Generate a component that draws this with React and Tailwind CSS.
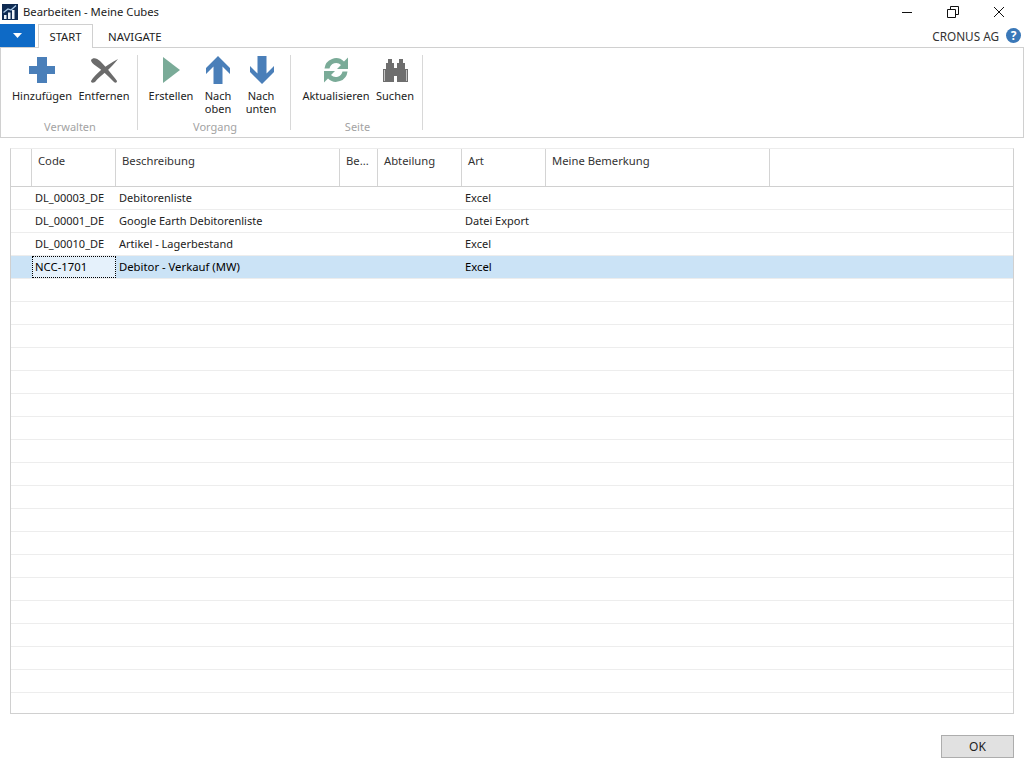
const FONT = "font-['Noto_Sans','Open_Sans',sans-serif]";
const GRID = "grid grid-cols-[21px_84px_224px_38px_84px_84px_224px_1fr]";

function Logo() {
  return (
    <svg width="16" height="16" viewBox="0 0 16 16" className="block">
      <rect width="16" height="16" fill="#0f2b52" />
      <rect x="2" y="11" width="2.5" height="4" fill="#eef3f8" />
      <rect x="6" y="8.5" width="2.5" height="6.5" fill="#eef3f8" />
      <rect x="10" y="6" width="2.5" height="9" fill="#eef3f8" />
      <path d="M1.5 8.5 L6 5 L9 6 L14 1.5" stroke="#a9c8e6" strokeWidth="1.3" fill="none" />
    </svg>
  );
}
function Plus() {
  return (
    <svg width="26" height="26" viewBox="0 0 26 26" className="block">
      <path d="M8 0h10v9h8v8h-8v9H8v-9H0V9h8z" fill="#4a7fb9" />
    </svg>
  );
}
function Cross() {
  return (
    <svg width="28" height="26" viewBox="0 0 28 26" className="block">
      <path d="M1 3 C3 0 7 1 10 4 C15 9 22 17 27 24 C27 26 25 26 24 25 C18 19 12 13 6 9 C3 7 1 5 1 3 Z" fill="#6b6b6b" />
      <path d="M28 2 C22 5 16 9 11 13 C7 17 3 20 1 24 C1 26 3 26 5 25 C8 21 13 17 17 14 C21 10 25 6 28 2 Z" fill="#6b6b6b" />
    </svg>
  );
}
function Play() {
  return (
    <svg width="17" height="26" viewBox="0 0 17 26" className="block">
      <path d="M0 0 L17 13 L0 26 Z" fill="#7aab98" />
    </svg>
  );
}
function Up() {
  return (
    <svg width="24" height="28" viewBox="0 0 24 28" className="block">
      <path d="M12 0 L24 12 V18 L16.500 10.500 V28 H7.500 V10.500 L0 18 V12 Z" fill="#4a7fb9" />
    </svg>
  );
}
function Down() {
  return (
    <svg width="24" height="28" viewBox="0 0 24 28" className="block ml-[2px]">
      <path d="M12 28 L24 16 V10 L16.500 17.500 V0 H7.500 V17.500 L0 10 V16 Z" fill="#4a7fb9" />
    </svg>
  );
}
function Refresh() {
  const arc = "M1.500 11.500 A11.500 11.500 0 0 1 21 4.500 L25 .5 V12 H14 L18 8 A6.800 6.800 0 0 0 6.500 11.500 Z";
  return (
    <svg width="26" height="26" viewBox="0 0 26 26" className="block">
      <path d={arc} fill="#7aab98" />
      <path d={arc} fill="#7aab98" transform="rotate(180 13 13)" />
    </svg>
  );
}
function Binoculars() {
  return (
    <svg width="27" height="23" viewBox="0 0 27 23" className="block">
      <path d="M6 0 H10 V4 H12 V23 H1 V10 H4 V4 H6 Z" fill="#6e6e6e" />
      <path d="M21 0 H17 V4 H15 V23 H26 V10 H23 V4 H21 Z" fill="#6e6e6e" />
      <rect x="12" y="9" width="3" height="8" fill="#6e6e6e" />
      <rect x="2" y="11" width="1" height="11" fill="#c4c4c4" />
      <rect x="24" y="11" width="1" height="11" fill="#c4c4c4" />
    </svg>
  );
}

function RibbonButton({ width, icon, lines }) {
  return (
    <div className={`${width} flex flex-col items-center`}>
      <div className="h-[30px] flex items-center justify-center">{icon}</div>
      <div className="mt-[4px] flex flex-col items-center text-[11px] leading-[13px] text-[#222222]">
        {lines.map((l) => (
          <span key={l} className="whitespace-nowrap">{l}</span>
        ))}
      </div>
    </div>
  );
}

function RibbonGroup({ width, pad, label, children }) {
  return (
    <div className={`${width} h-full flex flex-col`}>
      <div className={`${pad} flex-1 flex items-start pt-[7px]`}>{children}</div>
      <div className="h-[17px] pl-[2px] text-center text-[11px] leading-[14px] text-[#a3a3a3]">{label}</div>
    </div>
  );
}

const ROWS = [
  ["DL_00003_DE", "Debitorenliste", "Excel"],
  ["DL_00001_DE", "Google Earth Debitorenliste", "Datei Export"],
  ["DL_00010_DE", "Artikel - Lagerbestand", "Excel"],
  ["NCC-1701", "Debitor - Verkauf (MW)", "Excel"],
];
const HEADERS = ["", "Code", "Beschreibung", "Be...", "Abteilung", "Art", "Meine Bemerkung"];

export default function App() {
  const rows = Array.from({ length: 23 }, (_, i) => ROWS[i] || null);
  return (
    <div className={`${FONT} w-[1024px] h-[768px] bg-white overflow-hidden flex flex-col text-[11px] text-[#222222]`}>
      <div className="h-6 flex items-center shrink-0 pl-[2px]">
        <Logo />
        <span className="ml-[5px] leading-none text-[11.25px]">Bearbeiten - Meine Cubes</span>
        <div className="ml-auto flex items-center">
          <svg width="12" height="12" viewBox="0 0 12 12" className="mr-[34px] block"><path d="M1 6.500H11" stroke="#111" /></svg>
          <svg width="12" height="12" viewBox="0 0 12 12" className="mr-[34px] block"><path d="M.5 3.500H8.500V11.500H.5ZM3.500 3V.5H11.500V8.500H9" stroke="#111" fill="none" /></svg>
          <svg width="12" height="12" viewBox="0 0 12 12" className="mr-[19px] block"><path d="M1 1L11 11M11 1L1 11" stroke="#111" /></svg>
        </div>
      </div>
      <div className="h-[24px] flex shrink-0 relative">
        <div className="w-[35px] h-[23px] bg-[#0e6ac6] flex items-center justify-center">
          <svg width="9" height="5" viewBox="0 0 9 5"><path d="M0 0H9L4.500 5Z" fill="#fff" /></svg>
        </div>
        <div className="ml-[3px] w-[55px] h-[24px] pt-px border border-b-0 border-[#d0d0d0] bg-white z-10 flex items-center justify-center text-[11.25px]">START</div>
        <div className="ml-[15px] h-[25px] flex items-center text-[11.4px]">NAVIGATE</div>
        <div className="ml-auto h-[25px] flex items-center pr-[3px]">
          <span className="mr-[7px] text-[#333333] text-[11.75px]">CRONUS AG</span>
          <div className="w-[15px] h-[15px] -mt-[2px] rounded-full bg-[#3a78b8] flex items-center justify-center text-white font-bold text-[12px] leading-none">?</div>
        </div>
      </div>
      <div className="h-[91px] -mt-px border border-[#d0d0d0] flex shrink-0">
        <RibbonGroup width="w-[136px]" pad="pl-[9px]" label="Verwalten">
          <RibbonButton width="w-[64px]" icon={<Plus />} lines={["Hinzufügen"]} />
          <RibbonButton width="w-[60px]" icon={<Cross />} lines={["Entfernen"]} />
        </RibbonGroup>
        <div className="w-px h-[75px] mt-[7px] bg-[#d8d8d8]" />
        <RibbonGroup width="w-[152px]" pad="pl-[9px]" label="Vorgang">
          <RibbonButton width="w-[48px]" icon={<Play />} lines={["Erstellen"]} />
          <RibbonButton width="w-[46px]" icon={<Up />} lines={["Nach", "oben"]} />
          <RibbonButton width="w-[40px]" icon={<Down />} lines={["Nach", "unten"]} />
        </RibbonGroup>
        <div className="w-px h-[75px] mt-[7px] bg-[#d8d8d8]" />
        <RibbonGroup width="w-[131px]" pad="pl-[9px]" label="Seite">
          <RibbonButton width="w-[72px]" icon={<Refresh />} lines={["Aktualisieren"]} />
          <RibbonButton width="w-[46px]" icon={<Binoculars />} lines={["Suchen"]} />
        </RibbonGroup>
        <div className="w-px h-[75px] mt-[7px] bg-[#d8d8d8]" />
      </div>
      <div className="mx-[10px] mt-[10px] h-[566px] shrink-0 border border-[#d0d0d0] border-t-[#ececec] overflow-hidden">
        <div className={`${GRID} h-[38px] border-b border-[#d0d0d0] text-[#333333] text-[11.25px]`}>
          {HEADERS.map((h, i) => (
            <div key={i} className="border-r border-[#d4d4d4] pl-[6px] pt-[3px] leading-[18px] whitespace-nowrap">{h}</div>
          ))}
          <div />
        </div>
        {rows.map((r, i) => {
          const sel = i === 3;
          return (
            <div key={i} className={`${GRID} h-[23px] border-b border-[#ededed] ${sel ? "bg-[#cbe3f6] text-black text-[11.3px]" : ""}`}>
              <div />
              <div className={`pl-[3px] leading-[22px] whitespace-nowrap ${sel ? "bg-[#e5f1fb] outline-1 outline-dotted -outline-offset-1 outline-black" : ""}`}>{r ? r[0] : ""}</div>
              <div className="pl-[3px] leading-[22px] whitespace-nowrap">{r ? r[1] : ""}</div>
              <div />
              <div />
              <div className="pl-[3px] leading-[22px] whitespace-nowrap">{r ? r[2] : ""}</div>
              <div />
              <div />
            </div>
          );
        })}
      </div>
      <div className="flex justify-end pr-[10px] pt-[21px]">
        <div className="w-[73px] h-[23px] bg-[#e1e1e1] border border-[#adadad] flex items-center justify-center text-[12px]">OK</div>
      </div>
    </div>
  );
}
